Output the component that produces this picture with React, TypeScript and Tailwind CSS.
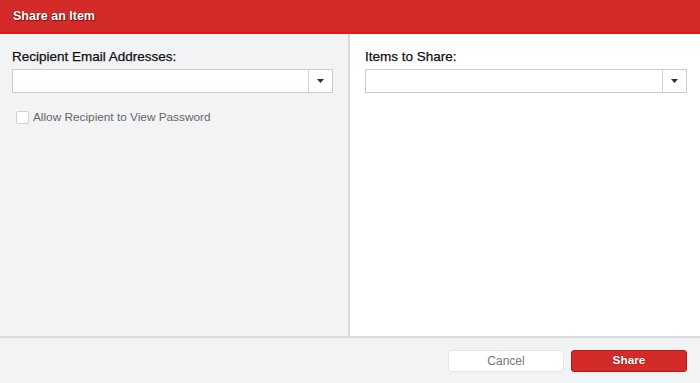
import { useState } from "react";

function Caret() {
  return (
    <svg width="7" height="4" viewBox="0 0 7 4" className="block">
      <path d="M0 0h7L3.5 4z" fill="#333" />
    </svg>
  );
}

function ComboBox() {
  return (
    <div className="flex h-6 w-full border border-[#c9cbcf] bg-white">
      <input className="min-w-0 flex-1 bg-transparent px-1.5 text-[12px] outline-none" />
      <button className="flex w-6 items-center justify-center border-l border-[#d3d5d8]">
        <Caret />
      </button>
    </div>
  );
}

export default function App() {
  const [allow, setAllow] = useState(false);

  return (
    <div className="flex h-[383px] w-[700px] flex-col bg-white font-['Liberation_Sans',Arial,sans-serif]">
      <header className="flex h-[34px] shrink-0 items-center border-b-2 border-[#e8160f] bg-[#d32b27] px-[13px]">
        <h1 className="text-[12.5px] font-bold text-white [text-shadow:0_0_1px_#5a0000,1px_1px_1px_rgba(60,0,0,0.6)]">
          Share an Item
        </h1>
      </header>

      <div className="flex min-h-0 flex-1">
        <section className="w-[350px] shrink-0 border-r-2 border-[#d6d8db] bg-[#f2f3f5] pl-3 pr-[15px] pt-[14px]">
          <label className="block text-[13.5px] leading-[18px] text-[#111] [-webkit-text-stroke:0.25px_#111]">
            Recipient Email Addresses:
          </label>
          <div className="mt-[3px]">
            <ComboBox />
          </div>
          <label className="mt-[16px] flex cursor-pointer items-center gap-[4px] pl-1 text-[11.8px] text-[#666]">
            <input
              type="checkbox"
              checked={allow}
              onChange={(e) => setAllow(e.target.checked)}
              className="h-[13px] w-[13px] appearance-none rounded-[2px] border border-[#cfd1d4] bg-white checked:bg-[#d32b27]"
            />
            Allow Recipient to View Password
          </label>
        </section>

        <section className="flex-1 pl-[15px] pr-[13px] pt-[14px]">
          <label className="block text-[13.5px] leading-[18px] text-[#111] [-webkit-text-stroke:0.25px_#111]">
            Items to Share:
          </label>
          <div className="mt-[3px]">
            <ComboBox />
          </div>
        </section>
      </div>

      <footer className="flex h-[47px] shrink-0 items-center justify-end gap-[7px] border-t-2 border-[#d9dbde] bg-[#f2f3f5] pr-[13px]">
        <button className="h-[22px] w-[116px] rounded-[3px] border border-[#e4e5e7] bg-white text-[12px] text-[#777]">
          Cancel
        </button>
        <button className="h-[22px] w-[116px] rounded-[3px] border border-[#b51c18] bg-[#d32b27] text-[11.8px] font-bold text-white [text-shadow:0_0_1px_#5a0000]">
          Share
        </button>
      </footer>
    </div>
  );
}
